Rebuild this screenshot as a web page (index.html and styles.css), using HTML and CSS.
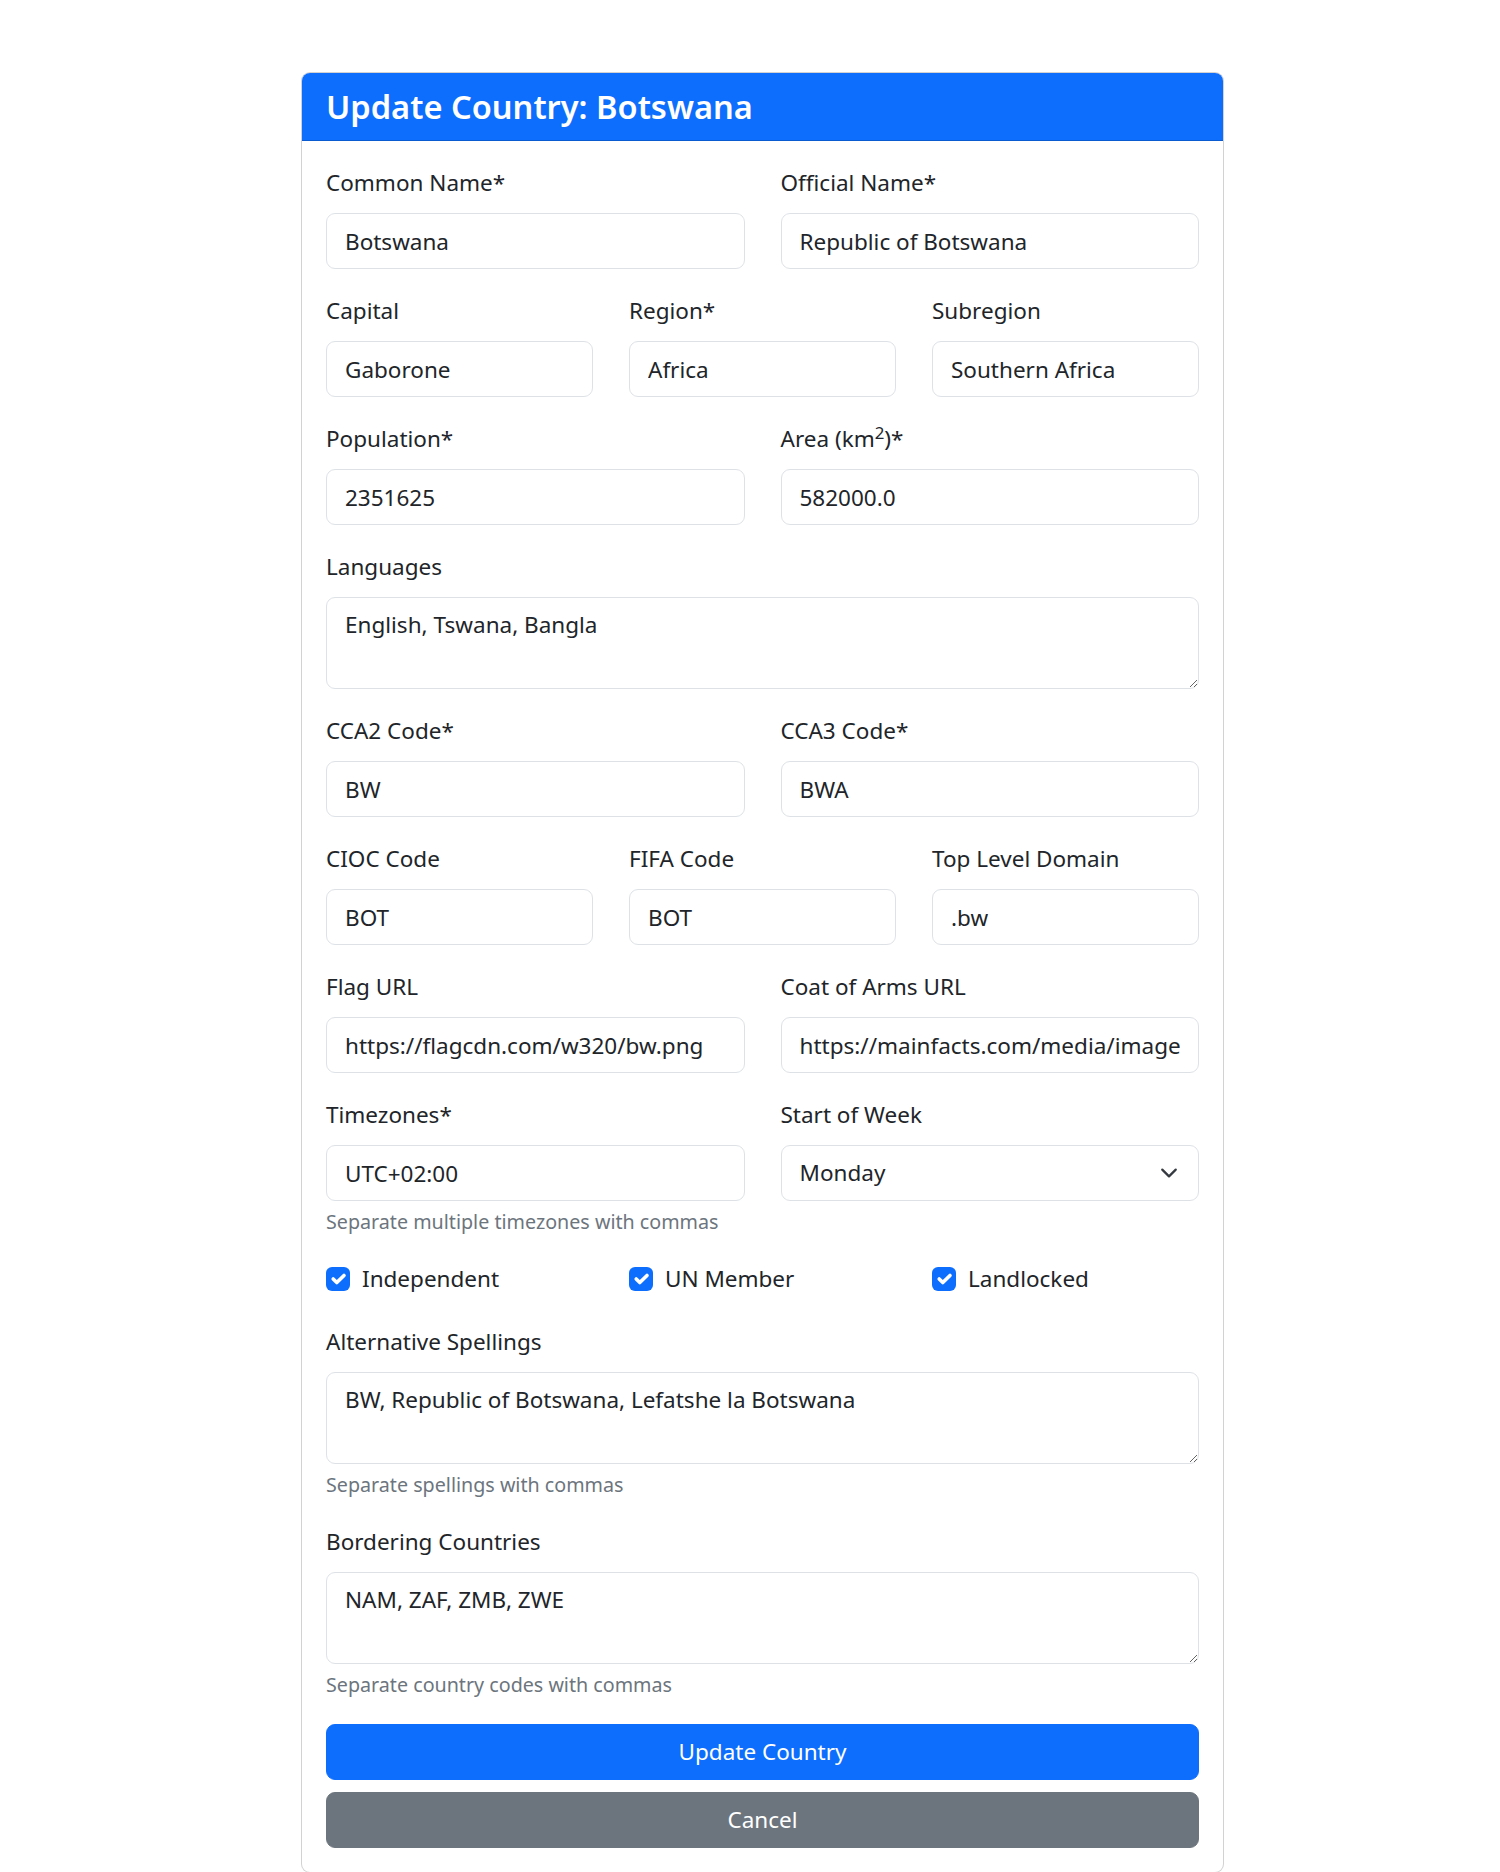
FILE: index.html
```html
<!DOCTYPE html>
<html lang="en">
<head>
<meta charset="utf-8">
<title>Update Country: Botswana</title>
<link rel="stylesheet" href="styles.css">
</head>
<body>
<div class="page">
  <div class="card">
    <div class="card-header">
      <h4 class="card-title">Update Country: Botswana</h4>
    </div>
    <div class="card-body">
      <form class="form">
        <div class="row row-2">
          <div class="group">
            <label class="form-label">Common Name*</label>
            <input class="form-control" type="text" value="Botswana">
          </div>
          <div class="group">
            <label class="form-label">Official Name*</label>
            <input class="form-control" type="text" value="Republic of Botswana">
          </div>
        </div>
        <div class="row row-3">
          <div class="group">
            <label class="form-label">Capital</label>
            <input class="form-control" type="text" value="Gaborone">
          </div>
          <div class="group">
            <label class="form-label">Region*</label>
            <input class="form-control" type="text" value="Africa">
          </div>
          <div class="group">
            <label class="form-label">Subregion</label>
            <input class="form-control" type="text" value="Southern Africa">
          </div>
        </div>
        <div class="row row-2">
          <div class="group">
            <label class="form-label">Population*</label>
            <input class="form-control" type="text" value="2351625">
          </div>
          <div class="group">
            <label class="form-label">Area (km<sup>2</sup>)*</label>
            <input class="form-control" type="text" value="582000.0">
          </div>
        </div>
        <div class="group">
          <label class="form-label">Languages</label>
          <textarea class="form-control textarea" rows="2">English, Tswana, Bangla</textarea>
        </div>
        <div class="row row-2">
          <div class="group">
            <label class="form-label">CCA2 Code*</label>
            <input class="form-control" type="text" value="BW">
          </div>
          <div class="group">
            <label class="form-label">CCA3 Code*</label>
            <input class="form-control" type="text" value="BWA">
          </div>
        </div>
        <div class="row row-3">
          <div class="group">
            <label class="form-label">CIOC Code</label>
            <input class="form-control" type="text" value="BOT">
          </div>
          <div class="group">
            <label class="form-label">FIFA Code</label>
            <input class="form-control" type="text" value="BOT">
          </div>
          <div class="group">
            <label class="form-label">Top Level Domain</label>
            <input class="form-control" type="text" value=".bw">
          </div>
        </div>
        <div class="row row-2">
          <div class="group">
            <label class="form-label">Flag URL</label>
            <input class="form-control" type="text" value="https://flagcdn.com/w320/bw.png">
          </div>
          <div class="group">
            <label class="form-label">Coat of Arms URL</label>
            <input class="form-control" type="text" value="https://mainfacts.com/media/images/coats_of_arms/bw.png">
          </div>
        </div>
        <div class="row row-2">
          <div class="group">
            <label class="form-label">Timezones*</label>
            <input class="form-control" type="text" value="UTC+02:00">
            <div class="help">Separate multiple timezones with commas</div>
          </div>
          <div class="group">
            <label class="form-label">Start of Week</label>
            <div class="select-wrap">
              <select class="form-control form-select">
                <option selected>Monday</option>
                <option>Sunday</option>
                <option>Saturday</option>
              </select>
              <svg class="chevron" width="24" height="18" viewBox="0 0 16 16" aria-hidden="true"><path d="m2 5 6 6 6-6" fill="none" stroke="#343a40" stroke-width="2" stroke-linecap="round" stroke-linejoin="round"/></svg>
            </div>
          </div>
        </div>
        <div class="row row-3 checks">
          <div class="check">
            <span class="box"><svg width="24" height="24" viewBox="0 0 20 20" aria-hidden="true"><path d="m6 10 3 3 6-6" fill="none" stroke="#fff" stroke-width="3" stroke-linecap="round" stroke-linejoin="round"/></svg></span>
            <span class="check-label">Independent</span>
          </div>
          <div class="check">
            <span class="box"><svg width="24" height="24" viewBox="0 0 20 20" aria-hidden="true"><path d="m6 10 3 3 6-6" fill="none" stroke="#fff" stroke-width="3" stroke-linecap="round" stroke-linejoin="round"/></svg></span>
            <span class="check-label">UN Member</span>
          </div>
          <div class="check">
            <span class="box"><svg width="24" height="24" viewBox="0 0 20 20" aria-hidden="true"><path d="m6 10 3 3 6-6" fill="none" stroke="#fff" stroke-width="3" stroke-linecap="round" stroke-linejoin="round"/></svg></span>
            <span class="check-label">Landlocked</span>
          </div>
        </div>
        <div class="group">
          <label class="form-label">Alternative Spellings</label>
          <textarea class="form-control textarea" rows="2">BW, Republic of Botswana, Lefatshe la Botswana</textarea>
          <div class="help">Separate spellings with commas</div>
        </div>
        <div class="group">
          <label class="form-label">Bordering Countries</label>
          <textarea class="form-control textarea" rows="2">NAM, ZAF, ZMB, ZWE</textarea>
          <div class="help">Separate country codes with commas</div>
        </div>
        <div class="actions">
          <button type="button" class="btn btn-primary">Update Country</button>
          <button type="button" class="btn btn-secondary">Cancel</button>
        </div>
      </form>
    </div>
  </div>
</div>
</body>
</html>
```
FILE: styles.css
```css
* {
  box-sizing: border-box;
}

html, body {
  margin: 0;
  padding: 0;
  background: #ffffff;
}

body {
  font-family: "Noto Sans", "Open Sans", sans-serif;
  font-size: 22.5px;
  line-height: 36px;
  color: #212529;
}

.page {
  padding: 72px 0 0 301px;
}

.card {
  width: 923px;
  border: 1px solid rgba(0, 0, 0, 0.175);
  border-radius: 9px;
  overflow: hidden;
  background: #fff;
}

.card-header {
  background: #0d6efd;
  color: #fff;
  padding: 12px 24px;
  border-bottom: 1px solid rgba(0, 0, 0, 0.175);
}

.card-title {
  margin: 0;
  font-size: 32.6px;
  font-weight: 600;
  line-height: 43px;
}

.card-body {
  padding: 24px;
}

.row {
  display: grid;
  column-gap: 36px;
}

.row-2 {
  grid-template-columns: 1fr 1fr;
}

.row-3 {
  grid-template-columns: 1fr 1fr 1fr;
}

.group {
  margin-bottom: 24px;
  min-width: 0;
}

.form-label {
  display: block;
  margin-bottom: 12px;
}

.form-label sup {
  font-size: 0.75em;
  line-height: 0;
  position: relative;
  top: -0.5em;
  vertical-align: baseline;
}

.form-control {
  display: block;
  width: 100%;
  height: 56px;
  padding: 9px 18px;
  font-family: inherit;
  font-size: 22.5px;
  line-height: 36px;
  color: #212529;
  background: #fff;
  border: 1px solid #dee2e6;
  border-radius: 9px;
  outline: none;
}

.textarea {
  height: 92px;
  resize: vertical;
}

.select-wrap {
  position: relative;
}

.form-select {
  appearance: none;
  -webkit-appearance: none;
  padding-right: 54px;
}

.chevron {
  position: absolute;
  right: 18px;
  top: 19px;
  pointer-events: none;
}

.help {
  margin-top: 6px;
  font-size: 19.7px;
  line-height: 30px;
  color: #6c757d;
}

.checks {
  margin-bottom: 24px;
}

.check {
  display: flex;
  align-items: flex-start;
  min-height: 36px;
  margin-bottom: 3px;
}

.box {
  flex: none;
  width: 24px;
  height: 24px;
  margin-top: 6px;
  margin-right: 12px;
  border-radius: 6px;
  background: #0d6efd;
  display: flex;
}

.actions {
  display: grid;
  row-gap: 12px;
}

.btn {
  display: block;
  width: 100%;
  padding: 9px 18px;
  font-family: inherit;
  font-size: 22.5px;
  line-height: 36px;
  color: #fff;
  border-radius: 9px;
  border: 1px solid transparent;
  text-align: center;
  cursor: pointer;
}

.btn-primary {
  background: #0d6efd;
  border-color: #0d6efd;
}

.btn-secondary {
  background: #6c757d;
  border-color: #6c757d;
}
```
